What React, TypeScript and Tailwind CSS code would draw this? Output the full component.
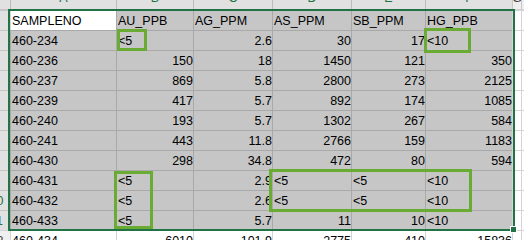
import React from "react";

type Cell = { v: string; right?: boolean };

const letters = ["A", "B", "C", "D", "E", "F", "G", "H"];

const L = (v: string): Cell => ({ v });
const R = (v: string): Cell => ({ v, right: true });

const rows: Cell[][] = [
  [L("SAMPLENO"), L("AU_PPB"), L("AG_PPM"), L("AS_PPM"), L("SB_PPM"), L("HG_PPB")],
  [L("460-234"), L("<5"), R("2.6"), R("30"), R("17"), L("<10")],
  [L("460-236"), R("150"), R("18"), R("1450"), R("121"), R("350")],
  [L("460-237"), R("869"), R("5.8"), R("2800"), R("273"), R("2125")],
  [L("460-239"), R("417"), R("5.7"), R("892"), R("174"), R("1085")],
  [L("460-240"), R("193"), R("5.7"), R("1302"), R("267"), R("584")],
  [L("460-241"), R("443"), R("11.8"), R("2766"), R("159"), R("1183")],
  [L("460-430"), R("298"), R("34.8"), R("472"), R("80"), R("594")],
  [L("460-431"), L("<5"), R("2.9"), L("<5"), L("<5"), L("<10")],
  [L("460-432"), L("<5"), R("2.6"), L("<5"), L("<5"), L("<10")],
  [L("460-433"), L("<5"), R("5.7"), R("11"), R("10"), L("<10")],
  [L("460-434"), R("6010"), R("101.9"), R("2775"), R("410"), R("15836")],
];

export default function App() {
  return (
    <div
      className="relative w-[524px] h-[240px] overflow-hidden bg-white text-black"
      style={{ fontFamily: '"Liberation Sans", Arial, sans-serif' }}
    >
      <div className="-ml-[17px] -mt-[10px] grid grid-cols-[27px_106px_77px_79px_79px_74px_87px_9px_80px] text-[12.5px] leading-[15px]">
        {/* header row */}
        <div className="h-[20px] bg-[#e1e1e1] border-b border-[#c6c6c6]" />
        {letters.map((l, i) => {
          const sel = i < 6;
          return (
            <div
              key={l}
              className={
                "h-[20px] border-l border-b flex items-end justify-center pb-[3px] overflow-hidden whitespace-nowrap " +
                (sel
                  ? "bg-[#e1e1e1] border-l-[#bcbcbc] border-b-[#c6c6c6] text-[#217346]"
                  : "bg-[#efefef] border-l-[#c8c8c8] border-b-[#d4d4d4] text-[#444444]")
              }
            >
              {l}
            </div>
          );
        })}
        {/* data rows */}
        {rows.map((r, ri) => {
          const rowSel = ri < 11;
          return (
            <React.Fragment key={ri}>
              <div
                className={
                  "h-[20px] border-t flex items-end justify-center pb-[1px] overflow-hidden whitespace-nowrap " +
                  (rowSel
                    ? "bg-[#e1e1e1] border-[#c6c6c6] text-[#217346]"
                    : "bg-[#efefef] border-[#d4d4d4] text-[#444444]")
                }
              >
                {ri + 1}
              </div>
              {r.map((c, ci) => {
                const active = ri === 0 && ci === 0;
                const cls = active
                  ? "bg-white border-[#d4d4d4]"
                  : rowSel
                  ? "bg-[#c6c6c6] border-[#a9a9a9]"
                  : "bg-white border-[#d4d4d4]";
                return (
                  <div
                    key={ci}
                    className={
                      "h-[20px] border-l border-t flex items-end pb-[1px] overflow-hidden whitespace-nowrap " +
                      (c.right ? "justify-end pr-0 " : "justify-start pl-[1px] ") +
                      cls
                    }
                  >
                    {c.v}
                  </div>
                );
              })}
              <div className="h-[20px] border-l border-t bg-white border-[#d4d4d4]" />
              <div className="h-[20px] border-l border-t bg-white border-[#d4d4d4]" />
            </React.Fragment>
          );
        })}
      </div>

      {/* selection border */}
      <div className="absolute left-[8px] top-[9px] w-[507px] h-[222px] border-2 border-[#217346] pointer-events-none" />
      {/* fill handle */}
      <div className="absolute left-[510px] top-[226px] w-[7px] h-[7px] bg-[#217346] border border-white" />

      {/* annotation boxes */}
      <div className="absolute left-[117px] top-[29px] w-[30px] h-[22px] border-[3px] border-[#6aab33]" />
      <div className="absolute left-[424px] top-[28px] w-[47px] h-[25px] border-[3px] border-[#6aab33]" />
      <div className="absolute left-[114px] top-[171px] w-[39px] h-[58px] border-[3px] border-[#6aab33]" />
      <div className="absolute left-[269px] top-[169px] w-[203px] h-[43px] border-[3px] border-[#6aab33]" />
    </div>
  );
}
